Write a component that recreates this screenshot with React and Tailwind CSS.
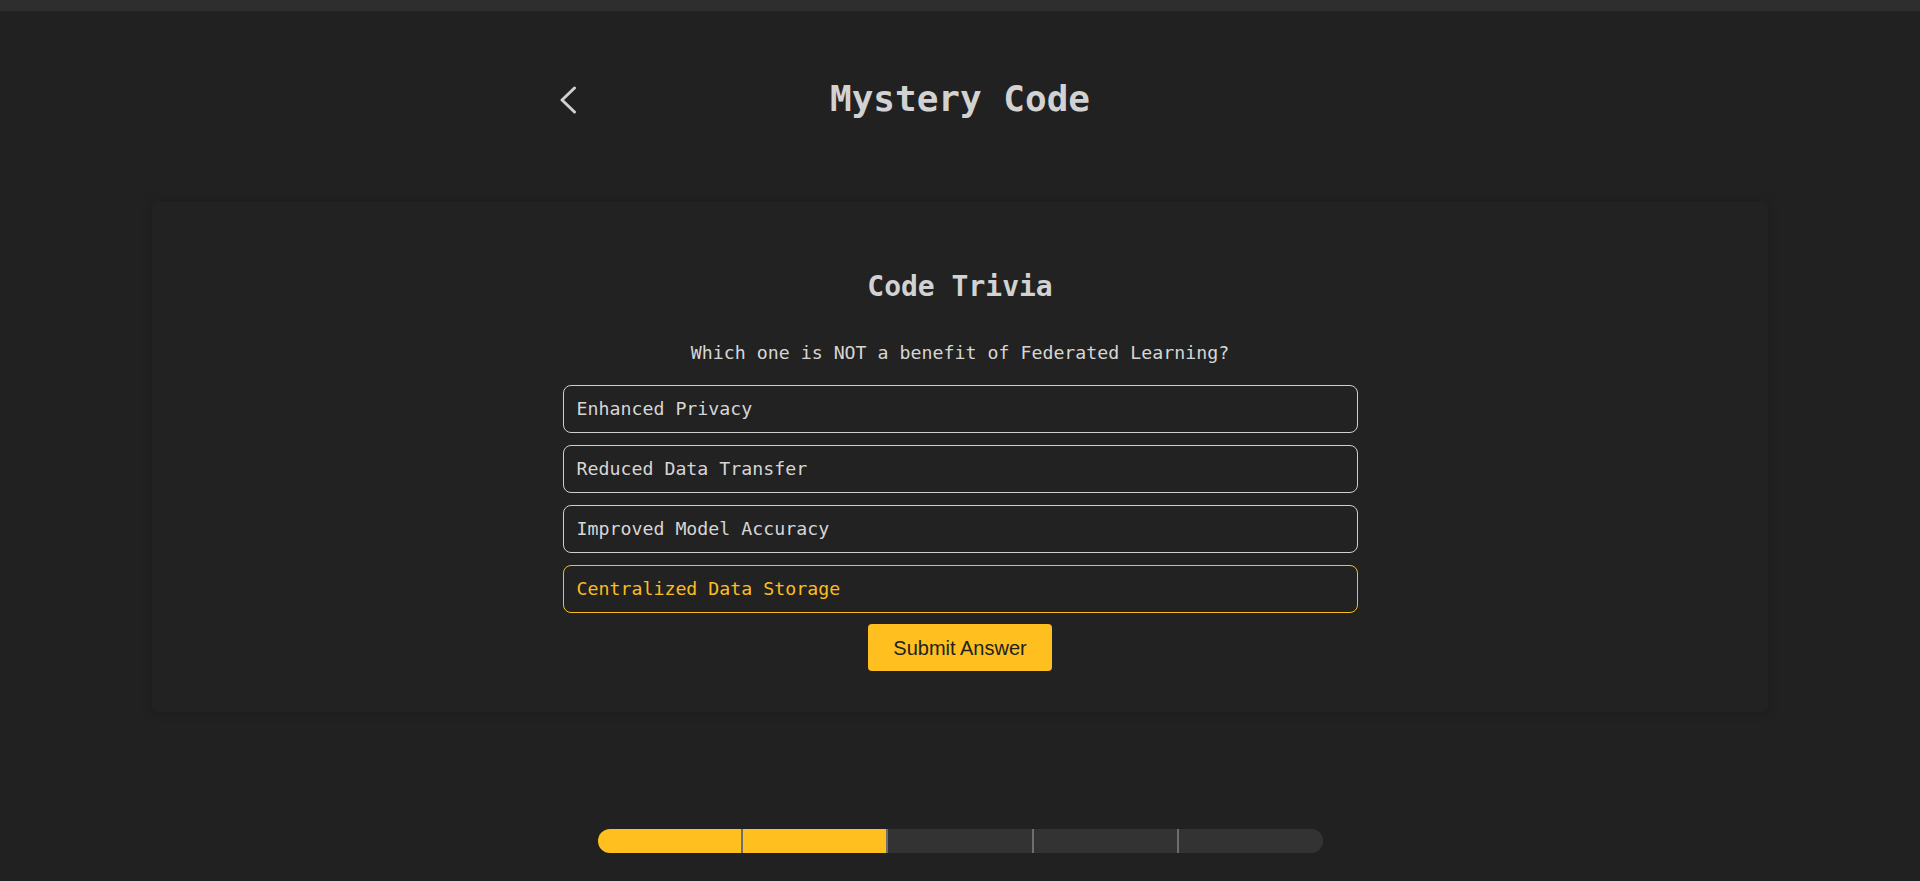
import React from "react";

const mono = { fontFamily: '"DejaVu Sans Mono", "Liberation Mono", monospace' };

const options = [
  "Enhanced Privacy",
  "Reduced Data Transfer",
  "Improved Model Accuracy",
  "Centralized Data Storage",
];

export default function App() {
  const selected = 3;
  return (
    <div className="min-h-[881px] w-full bg-[#212121] flex flex-col" style={mono}>
      <div className="h-[11px] w-full bg-[#2e2e2e]" />
      <div className="w-[800px] mx-auto mt-[66px] relative flex items-center justify-center h-[44px]">
        <button className="absolute left-0 top-[9px] w-[17px] h-[28px] flex items-center justify-center">
          <svg width="17" height="28" viewBox="0 0 17 28" fill="none">
            <polyline points="14.5,2 2,14 14.5,26" stroke="#d0d0d0" strokeWidth="3" strokeLinecap="round" strokeLinejoin="round" />
          </svg>
        </button>
        <h1 className="text-[36px] leading-[44px] font-bold text-[#d2d2d2]">Mystery Code</h1>
      </div>

      <div className="mx-[152px] mt-[81px] bg-[#222222] rounded-md shadow-[0_0_12px_rgba(0,0,0,0.18)] pt-[67px] pb-[41px] flex flex-col items-center">
        <h2 className="text-[28px] leading-[36px] font-bold text-[#d2d2d2]">Code Trivia</h2>
        <p className="mt-[34px] text-[18.25px] leading-[28px] text-[#d6d6d6]">
          Which one is NOT a benefit of Federated Learning?
        </p>
        <div className="mt-[18px] w-[795px] flex flex-col gap-[12px]">
          {options.map((o, i) => (
            <div
              key={o}
              className={
                i === selected
                  ? "h-[48px] flex items-center pl-[13px] rounded-[8px] border border-[#fbbd1e] text-[#fbbd1e] text-[18.25px]"
                  : "h-[48px] flex items-center pl-[13px] rounded-[8px] border border-[#cfcfcf] text-[#d6d6d6] text-[18.25px]"
              }
            >
              {o}
            </div>
          ))}
        </div>
        <button
          className="mt-[11px] h-[47px] w-[184px] rounded-[4px] bg-[#ffbf1f] text-[#222222] text-[20px] flex items-center justify-center"
          style={{ fontFamily: '"Liberation Sans", Arial, sans-serif' }}
        >
          Submit Answer
        </button>
      </div>

      <div className="mt-[117px] mx-auto w-[725px] h-[24px] rounded-full overflow-hidden flex bg-[#333333]">
        {[0, 1, 2, 3, 4].map((i) => (
          <div
            key={i}
            className={
              (i < 2 ? "bg-[#ffbf1f] " : "bg-[#333333] ") +
              (i > 0 ? "border-l-2 border-[#6e6e6e] " : "") +
              "flex-1 h-full"
            }
          />
        ))}
      </div>
    </div>
  );
}
